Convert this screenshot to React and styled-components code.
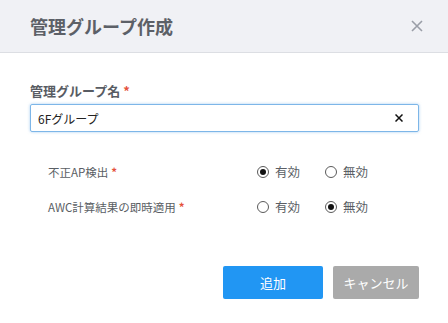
import React, { useState } from 'react';
import styled, { createGlobalStyle } from 'styled-components';

const GlobalStyle = createGlobalStyle`
  body {
    margin: 0;
    background: #fff;
    font-family: "Noto Sans CJK JP", "Noto Sans", sans-serif;
  }
`;

const Dialog = styled.div`
  width: 448px;
  height: 323px;
  background: #fff;
`;

const Header = styled.div`
  height: 52px;
  background: #f0f1f5;
  border-bottom: 1px solid #dcdee3;
  display: flex;
  align-items: center;
  justify-content: space-between;
  padding: 0 24px 0 30px;
`;

const Title = styled.h1`
  margin: 0;
  font-size: 18px;
  font-weight: 700;
  color: #5c6067;
  line-height: 20px;
`;

const CloseButton = styled.button`
  border: none;
  background: none;
  padding: 0;
  width: 14px;
  height: 14px;
  display: flex;
  align-items: center;
  justify-content: center;
  cursor: pointer;
`;

const Body = styled.div`
  padding: 29px 29px 0 30px;
`;

const FieldLabel = styled.div`
  font-size: 13px;
  font-weight: 700;
  color: #585c63;
  line-height: 18px;
  margin-bottom: 4px;
`;

const Required = styled.span`
  color: #e5533d;
  margin-left: 3px;
  font-weight: 700;
`;

const InputWrap = styled.div`
  height: 28px;
  border: 1px solid #7db6e8;
  border-radius: 2px;
  box-shadow: 0 0 3px rgba(90, 160, 230, 0.55);
  display: flex;
  align-items: center;
  box-sizing: border-box;
`;

const TextInput = styled.input`
  flex: 1;
  border: none;
  outline: none;
  height: 100%;
  padding: 0 7px;
  font-family: inherit;
  font-size: 12px;
  color: #222;
  background: transparent;
  caret-color: #000;
`;

const ClearButton = styled.button`
  border: none;
  background: none;
  width: 12px;
  height: 12px;
  padding: 0;
  margin-right: 13px;
  display: flex;
  align-items: center;
  justify-content: center;
`;

const Options = styled.div`
  margin: 22px 0 0 18px;
`;

const OptionRow = styled.div`
  display: flex;
  align-items: center;
  height: 35px;
`;

const RowLabel = styled.div`
  width: 209px;
  font-size: 11.5px;
  color: #5a5e64;
`;

const RadioOption = styled.label`
  width: 68px;
  display: flex;
  align-items: center;
  font-size: 12.5px;
  color: #5a5e64;
  cursor: pointer;
`;

const RadioCircle = styled.span`
  width: 12px;
  height: 12px;
  box-sizing: border-box;
  border: 1px solid #5a5a5a;
  border-radius: 50%;
  margin-right: 6px;
  display: flex;
  align-items: center;
  justify-content: center;

  &::after {
    content: '';
    width: 6px;
    height: 6px;
    border-radius: 50%;
    background: ${({ checked }) => (checked ? '#111' : 'transparent')};
  }
`;

const Footer = styled.div`
  display: flex;
  justify-content: flex-end;
  gap: 10px;
  margin-top: 42px;
`;

const Button = styled.button`
  height: 33px;
  width: ${({ width }) => width}px;
  border: none;
  border-radius: 2px;
  background: ${({ variant }) => (variant === 'primary' ? '#2196f3' : '#aaaaaa')};
  color: #fff;
  font-family: inherit;
  font-size: 13px;
  cursor: pointer;
`;

const Radio = ({ checked, label, onClick }) => (
  <RadioOption onClick={onClick}>
    <RadioCircle checked={checked} />
    {label}
  </RadioOption>
);

const App = () => {
  const [name, setName] = useState('6Fグループ');
  const [rogue, setRogue] = useState(true);
  const [awc, setAwc] = useState(false);

  return (
    <Dialog>
      <GlobalStyle />
      <Header>
        <Title>管理グループ作成</Title>
        <CloseButton aria-label="close">
          <svg width="12" height="12" viewBox="0 0 12 12">
            <path d="M1 1L11 11M11 1L1 11" stroke="#9a9ea7" strokeWidth="1.6" />
          </svg>
        </CloseButton>
      </Header>
      <Body>
        <FieldLabel>
          管理グループ名<Required>*</Required>
        </FieldLabel>
        <InputWrap>
          <TextInput value={name} onChange={(e) => setName(e.target.value)} autoFocus />
          <ClearButton aria-label="clear" onClick={() => setName('')}>
            <svg width="8" height="8" viewBox="0 0 8 8">
              <path d="M0.5 0.5L7.5 7.5M7.5 0.5L0.5 7.5" stroke="#111" strokeWidth="1.5" />
            </svg>
          </ClearButton>
        </InputWrap>
        <Options>
          <OptionRow>
            <RowLabel>
              不正AP検出<Required>*</Required>
            </RowLabel>
            <Radio checked={rogue} label="有効" onClick={() => setRogue(true)} />
            <Radio checked={!rogue} label="無効" onClick={() => setRogue(false)} />
          </OptionRow>
          <OptionRow>
            <RowLabel>
              AWC計算結果の即時適用<Required>*</Required>
            </RowLabel>
            <Radio checked={awc} label="有効" onClick={() => setAwc(true)} />
            <Radio checked={!awc} label="無効" onClick={() => setAwc(false)} />
          </OptionRow>
        </Options>
        <Footer>
          <Button variant="primary" width={100}>追加</Button>
          <Button width={86}>キャンセル</Button>
        </Footer>
      </Body>
    </Dialog>
  );
};

export default App;
